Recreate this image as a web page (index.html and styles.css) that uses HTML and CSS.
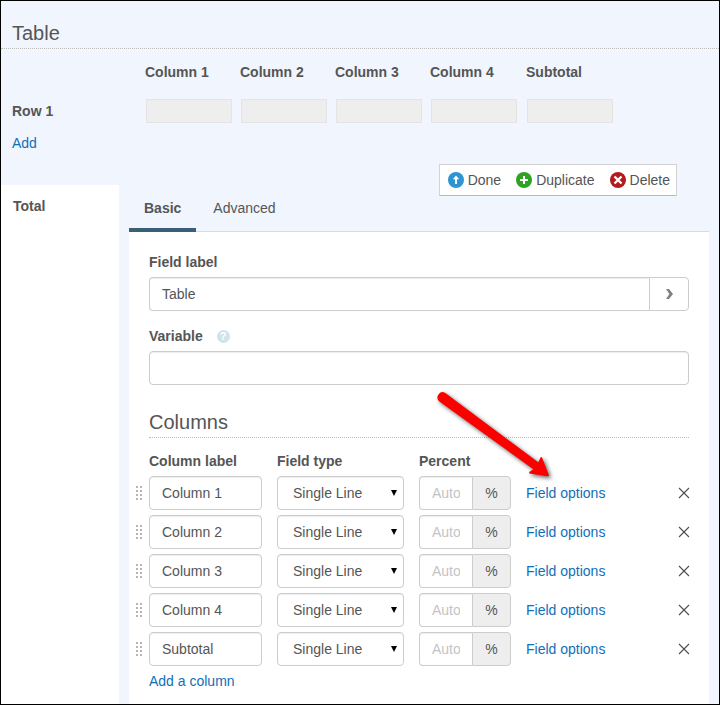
FILE: index.html
```html
<!DOCTYPE html>
<html lang="en">
<head>
<meta charset="utf-8">
<meta name="viewport" content="width=device-width, initial-scale=1">
<title>Table</title>
<link rel="stylesheet" href="styles.css">
</head>
<body>
<svg class="defs" aria-hidden="true">
  <symbol id="grip" viewBox="0 0 6 14">
    <path d="M0 0h2v2H0zM4 0h2v2H4zM0 4h2v2H0zM4 4h2v2H4zM0 8h2v2H0zM4 8h2v2H4zM0 12h2v2H0zM4 12h2v2H4z" fill="#b5b5b5"/>
  </symbol>
  <symbol id="cross" viewBox="0 0 12 12">
    <path d="M1 1l10 10M11 1L1 11" stroke="#4d4d4d" stroke-width="1.1" fill="none"/>
  </symbol>
</svg>
<div class="frame">
  <header class="title"><h1>Table</h1></header>

  <section class="preview">
    <table>
      <thead>
        <tr><td></td><th>Column 1</th><th>Column 2</th><th>Column 3</th><th>Column 4</th><th class="last">Subtotal</th></tr>
      </thead>
      <tbody>
        <tr>
          <th>Row 1</th>
          <td><input disabled aria-label="Column 1"></td>
          <td><input disabled aria-label="Column 2"></td>
          <td><input disabled aria-label="Column 3"></td>
          <td><input disabled aria-label="Column 4"></td>
          <td class="last"><input disabled aria-label="Subtotal"></td>
        </tr>
      </tbody>
    </table>
    <a class="add-row" href="#">Add</a>
  </section>

  <div class="body">
    <aside class="total">Total</aside>
    <main class="editor">
      <div class="toolbar">
        <button type="button"><svg width="16" height="16" viewBox="0 0 16 16"><circle cx="8" cy="8" r="8" fill="#2b96d2"/><path d="M8 3.5L4.8 7.2h2.2V12h2V7.2h2.2z" fill="#fff"/></svg>Done</button>
        <button type="button"><svg width="16" height="16" viewBox="0 0 16 16"><circle cx="8" cy="8" r="8" fill="#2da323"/><path d="M8 4v8M4 8h8" stroke="#fff" stroke-width="2"/></svg>Duplicate</button>
        <button type="button"><svg width="16" height="16" viewBox="0 0 16 16"><circle cx="8" cy="8" r="8" fill="#b51a1c"/><path d="M4.500 4.500l7 7M11.500 4.500l-7 7" stroke="#fff" stroke-width="2.400"/></svg>Delete</button>
      </div>
      <nav class="tabs">
        <a class="active" href="#">Basic</a>
        <a href="#">Advanced</a>
      </nav>
      <div class="panel">
        <div class="field">
          <label for="field-label">Field label</label>
          <div class="group">
            <input id="field-label" class="box" value="Table">
            <button class="more" type="button" aria-label="More"><svg width="7" height="10" viewBox="0 0 7 10"><path d="M0 0h3l4 5-4 5H0l3.400-5z" fill="#808080"/></svg></button>
          </div>
        </div>
        <div class="field">
          <div class="label-line">
            <label for="variable">Variable</label>
            <span class="help">?</span>
          </div>
          <input id="variable" class="box">
        </div>
        <h2>Columns</h2>
      </div>

      <section class="columns">
        <div class="row head"><span></span><b>Column label</b><b>Field type</b><b>Percent</b></div>
        <div class="row">
          <svg class="grip"><use href="#grip"/></svg>
          <input class="box" aria-label="Column label" value="Column 1">
          <div class="select"><select class="box" aria-label="Field type"><option>Single Line</option></select></div>
          <div class="group"><input class="box" aria-label="Percent" placeholder="Auto"><span class="unit">%</span></div>
          <a href="#">Field options</a>
          <button class="remove" type="button" aria-label="Remove"><svg><use href="#cross"/></svg></button>
        </div>
        <div class="row">
          <svg class="grip"><use href="#grip"/></svg>
          <input class="box" aria-label="Column label" value="Column 2">
          <div class="select"><select class="box" aria-label="Field type"><option>Single Line</option></select></div>
          <div class="group"><input class="box" aria-label="Percent" placeholder="Auto"><span class="unit">%</span></div>
          <a href="#">Field options</a>
          <button class="remove" type="button" aria-label="Remove"><svg><use href="#cross"/></svg></button>
        </div>
        <div class="row">
          <svg class="grip"><use href="#grip"/></svg>
          <input class="box" aria-label="Column label" value="Column 3">
          <div class="select"><select class="box" aria-label="Field type"><option>Single Line</option></select></div>
          <div class="group"><input class="box" aria-label="Percent" placeholder="Auto"><span class="unit">%</span></div>
          <a href="#">Field options</a>
          <button class="remove" type="button" aria-label="Remove"><svg><use href="#cross"/></svg></button>
        </div>
        <div class="row">
          <svg class="grip"><use href="#grip"/></svg>
          <input class="box" aria-label="Column label" value="Column 4">
          <div class="select"><select class="box" aria-label="Field type"><option>Single Line</option></select></div>
          <div class="group"><input class="box" aria-label="Percent" placeholder="Auto"><span class="unit">%</span></div>
          <a href="#">Field options</a>
          <button class="remove" type="button" aria-label="Remove"><svg><use href="#cross"/></svg></button>
        </div>
        <div class="row">
          <svg class="grip"><use href="#grip"/></svg>
          <input class="box" aria-label="Column label" value="Subtotal">
          <div class="select"><select class="box" aria-label="Field type"><option>Single Line</option></select></div>
          <div class="group"><input class="box" aria-label="Percent" placeholder="Auto"><span class="unit">%</span></div>
          <a href="#">Field options</a>
          <button class="remove" type="button" aria-label="Remove"><svg><use href="#cross"/></svg></button>
        </div>
        <a class="add-column" href="#">Add a column</a>
        <svg class="pointer" width="140" height="100" viewBox="0 0 140 100" aria-hidden="true">
          <path d="M16 12.700L109.300 82.300L111.700 77.300Q112.500 76.500 113.300 78L120 95.500Q120 96.500 118 96.300L100.500 93.500Q99.500 92.500 101 91.500L104.300 89.300L10 21.200A5.300 5.300 0 0 1 16 12.700z" fill="#fc0000"/>
        </svg>
      </section>
    </main>
  </div>
</div>
</body>
</html>
```

FILE: styles.css
```css
* {
  box-sizing: border-box;
}

body {
  margin: 0;
  background: #f1f6fe;
  color: #555;
  font: 14px/20px "Liberation Sans", Arial, sans-serif;
}

input, select, button {
  font: inherit;
  color: inherit;
  margin: 0;
}

button {
  border: 0;
  padding: 0;
  background: none;
}

a {
  color: #106fb9;
  text-decoration: none;
}

.defs {
  display: none;
}

.frame {
  display: flex;
  flex-direction: column;
  min-height: 100vh;
  border: 1px solid #000;
}

h1, h2 {
  margin: 0;
  font-size: 20px;
  line-height: 28px;
  font-weight: normal;
}

.title {
  padding: 18px 11px 1px;
  border-bottom: 1px dotted #bbb;
}

/* Preview of the table being edited */
.preview {
  padding: 13px 11px 11px;
}

.preview table {
  border-collapse: collapse;
  table-layout: fixed;
}

.preview th, .preview td {
  width: 95px;
  padding: 0 0 17px;
  text-align: left;
  vertical-align: middle;
}

.preview tr > :first-child {
  width: 133px;
}

.preview tbody th, .preview tbody td {
  padding-bottom: 10px;
}

.preview tr .last {
  padding-left: 1px;
}

.preview input {
  display: block;
  width: 86px;
  height: 24px;
  margin-left: 1px;
  border: 1px solid #e4e4e4;
  background: #eee;
}

.add-row {
  display: block;
}

.body {
  display: flex;
  flex: 1;
  gap: 10px;
  padding-right: 10px;
}

.total {
  width: 118px;
  margin-top: 21px;
  padding: 11px 12px;
  background: #fff;
  font-weight: bold;
}

.editor {
  display: flex;
  flex: 1;
  flex-direction: column;
  min-width: 0;
}

.toolbar {
  display: flex;
  align-self: flex-end;
  gap: 15px;
  height: 32px;
  margin-right: 32px;
  padding: 0 6px 0 8px;
  border: 1px solid #d3d3d3;
  border-bottom-color: #bbb;
  background: #fff;
}

.toolbar button {
  display: flex;
  align-items: center;
  gap: 4px;
}

.tabs {
  display: flex;
  gap: 2px;
  box-shadow: inset 0 -1px #d9dcdf;
}

.tabs a {
  padding: 2px 15px 10px;
  border-bottom: 4px solid transparent;
  color: inherit;
}

.tabs .active {
  border-color: #3a6078;
  font-weight: bold;
}

.panel {
  padding: 20px 20px 0;
  background: #fff;
}

.field {
  margin-bottom: 15px;
}

.field label {
  display: block;
  font-weight: bold;
}

.field .box, .field .group {
  margin-top: 5px;
}

.field .group .box {
  margin-top: 0;
}

.label-line {
  display: flex;
  align-items: center;
  gap: 14px;
}

.help {
  width: 13px;
  height: 13px;
  border-radius: 50%;
  background: #cfe3ee;
  color: #fff;
  font-size: 11px;
  line-height: 13px;
  font-weight: bold;
  text-align: center;
}

.box {
  display: block;
  width: 100%;
  height: 34px;
  padding: 0 12px;
  border: 1px solid #ccc;
  border-radius: 4px;
  background: #fff;
  box-shadow: inset 0 1px 1px rgba(0, 0, 0, 0.07);
}

.box::placeholder {
  color: #c4c4c4;
  opacity: 1;
}

.group {
  display: flex;
}

.group .box {
  flex: 1;
  min-width: 0;
  border-right: 0;
  border-radius: 4px 0 0 4px;
}

.more, .unit {
  display: flex;
  align-items: center;
  justify-content: center;
  width: 40px;
  height: 34px;
  border: 1px solid #ccc;
  border-radius: 0 4px 4px 0;
}

.unit {
  width: 39px;
  background: #eee;
}

h2 {
  margin-top: 23px;
  padding-bottom: 1px;
  border-bottom: 1px dotted #bbb;
}

/* Column list */
.columns {
  position: relative;
  flex: 1;
  padding: 13px 20px 13px 0;
  background: #fff;
}

.row {
  display: grid;
  grid-template-columns: 5px 113px 127px 92px 1fr 10px;
  gap: 15px;
  align-items: center;
  margin-bottom: 5px;
}

.grip {
  width: 6px;
  height: 14px;
  margin-left: 7px;
}

.select {
  position: relative;
}

.select select {
  padding: 0 15px;
  appearance: none;
}

.select::after {
  content: "";
  position: absolute;
  top: 14px;
  right: 7px;
  border: solid transparent;
  border-width: 6px 3px 0;
  border-top-color: #000;
  pointer-events: none;
}

.remove {
  display: flex;
  justify-content: center;
}

.remove svg {
  flex: none;
  width: 12px;
  height: 12px;
}

.add-column {
  margin-left: 20px;
}

.pointer {
  position: absolute;
  top: -58px;
  left: 300px;
  filter: drop-shadow(2px 2px 2px rgba(0, 0, 0, 0.6));
  pointer-events: none;
}
```
